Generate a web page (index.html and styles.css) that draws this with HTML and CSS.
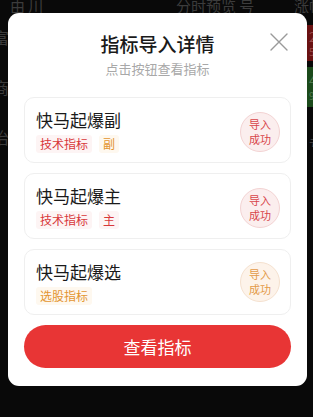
FILE: index.html
```html
<!DOCTYPE html>
<html lang="zh">
<head>
<meta charset="utf-8">
<link rel="stylesheet" href="styles.css">
</head>
<body>
<div class="bg">
  <div class="bg-head">
    <span class="bg-tab">由 川</span>
    <span class="bg-mid">分时预览 号</span>
    <span class="bg-right">涨幅</span>
  </div>
  <div class="bg-row">
    <div class="bg-left"><span class="bg-name">富</span><span class="bg-code">3</span></div>
    <div class="bg-chip red"><span>2</span><span class="small">5</span></div>
  </div>
  <div class="bg-row">
    <div class="bg-left"><span class="bg-name">商</span><span class="bg-code">9</span></div>
    <div class="bg-chip green"><span>4</span><span class="small">9</span></div>
  </div>
  <div class="bg-row">
    <div class="bg-left"><span class="bg-name">治</span></div>
    <div class="bg-chip"><span>亏</span></div>
  </div>
</div>

<div class="modal">
  <button class="close" aria-label="关闭">
    <svg width="20" height="20" viewBox="0 0 20 20"><path d="M2 2 L18 18 M18 2 L2 18" stroke="#9a9a9a" stroke-width="1.4" fill="none" stroke-linecap="round"/></svg>
  </button>
  <h1 class="title">指标导入详情</h1>
  <p class="subtitle">点击按钮查看指标</p>

  <div class="list">
    <div class="card">
      <div class="info">
        <div class="name">快马起爆副</div>
        <div class="tags"><span class="tag red">技术指标</span><span class="tag orange">副</span></div>
      </div>
      <div class="badge red"><span>导入</span><span>成功</span></div>
    </div>
    <div class="card">
      <div class="info">
        <div class="name">快马起爆主</div>
        <div class="tags"><span class="tag red">技术指标</span><span class="tag red">主</span></div>
      </div>
      <div class="badge red"><span>导入</span><span>成功</span></div>
    </div>
    <div class="card">
      <div class="info">
        <div class="name">快马起爆选</div>
        <div class="tags"><span class="tag orange">选股指标</span></div>
      </div>
      <div class="badge orange"><span>导入</span><span>成功</span></div>
    </div>
  </div>

  <button class="primary">查看指标</button>
</div>
</body>
</html>
```
FILE: styles.css
```css
* { box-sizing: border-box; }
html, body { margin: 0; padding: 0; }
body {
  width: 313px;
  height: 417px;
  overflow: hidden;
  background: #090909;
  font-family: "Noto Sans CJK SC", "Noto Sans", sans-serif;
  position: relative;
}
.bg { color: #3c3c3c; }
.bg-head {
  height: 13px;
  display: flex;
  align-items: flex-end;
  font-size: 15px;
  line-height: 15px;
  overflow: hidden;
  padding-left: 10px;
  white-space: nowrap;
}
.bg-tab { width: 166px; flex-shrink: 0; }
.bg-mid { width: 118px; flex-shrink: 0; }
.bg-right { flex-shrink: 0; }
.bg-row {
  height: 50px;
  display: flex;
  justify-content: space-between;
  align-items: flex-start;
}
.bg-left {
  display: flex;
  flex-direction: column;
  margin-left: -7px;
  padding-top: 14px;
}
.bg-name { font-size: 16px; line-height: 20px; }
.bg-code { font-size: 12px; line-height: 16px; margin-top: 2px; }
.bg-chip {
  width: 40px;
  margin-right: -33px;
  margin-top: 12px;
  height: 36px;
  display: flex;
  flex-direction: column;
  justify-content: center;
  gap: 2px;
  padding-left: 3px;
  font-size: 13px;
  line-height: 15px;
}
.bg-chip .small { font-size: 10px; line-height: 12px; }
.bg-chip.red { background: #6a1212; color: #9a4a4a; }
.bg-chip.green { background: #1b4a1b; color: #4e7a4e; height: 40px; margin-top: 4px; }

.modal {
  position: absolute;
  left: 8px;
  top: 13px;
  width: 299px;
  height: 373px;
  background: #fff;
  border-radius: 11px;
  padding: 17px 16px 0;
  display: flex;
  flex-direction: column;
}
.close {
  position: absolute;
  top: 19px;
  right: 18px;
  width: 20px;
  height: 20px;
  padding: 0;
  border: 0;
  background: none;
  display: block;
}
.close svg { display: block; }
.title {
  margin: 0;
  text-align: center;
  font-size: 19px;
  line-height: 28px;
  font-weight: 500;
  color: #1a1a1a;
}
.subtitle {
  margin: 2px 0 0;
  text-align: center;
  font-size: 13px;
  line-height: 18px;
  color: #a8a8a8;
}
.list {
  margin-top: 19px;
  display: flex;
  flex-direction: column;
  gap: 10px;
}
.card {
  height: 66px;
  border: 1px solid #efefef;
  border-radius: 10px;
  padding: 0 10px 0 11px;
  display: flex;
  align-items: center;
  justify-content: space-between;
}
.info { display: flex; flex-direction: column; }
.name {
  font-size: 17px;
  line-height: 24px;
  color: #1a1a1a;
}
.tags {
  display: flex;
  gap: 7px;
  margin-top: 3px;
}
.tag {
  font-size: 12px;
  line-height: 18px;
  padding: 0 4px;
  border-radius: 3px;
}
.tag.red { color: #d8383a; background: #fdf4f4; }
.tag.orange { color: #e3952f; background: #fef8ef; }
.badge {
  width: 40px;
  height: 40px;
  border-radius: 50%;
  font-size: 11px;
  line-height: 15px;
  display: flex;
  flex-direction: column;
  align-items: center;
  justify-content: center;
  margin-top: 4px;
}
.badge.red { color: #d8454a; background: #fbeeee; border: 1px solid #f3d3d3; }
.badge.orange { color: #e39a48; background: #fdf3ea; border: 1px solid #f5e1cf; margin-top: 0; }
.primary {
  margin-top: 10px;
  height: 43px;
  border: 0;
  border-radius: 22px;
  background: #e83535;
  color: #fff;
  font-family: inherit;
  font-size: 17px;
  width: 100%;
}
```
